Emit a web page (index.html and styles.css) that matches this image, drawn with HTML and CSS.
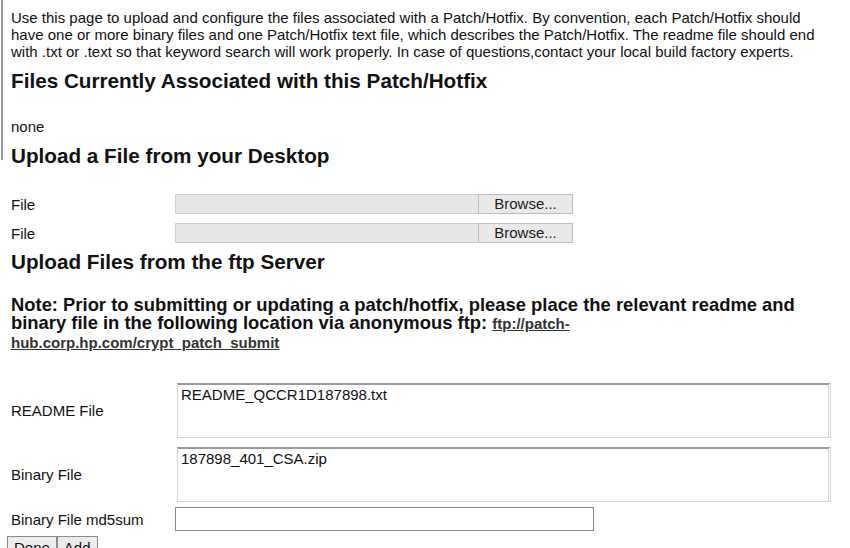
FILE: index.html
```html
<!DOCTYPE html>
<html>
<head>
<meta charset="utf-8">
<link rel="stylesheet" href="styles.css">
</head>
<body>
<div class="page">
  <div class="intro-block">
    <p class="intro">Use this page to upload and configure the files associated with a Patch/Hotfix. By convention, each Patch/Hotfix should have one or more binary files and one Patch/Hotfix text file, which describes the Patch/Hotfix. The readme file should end with .txt or .text so that keyword search will work properly. In case of questions,contact your local build factory experts.</p>
    <h3 class="section-title">Files Currently Associated with this Patch/Hotfix</h3>
    <p class="none">none</p>
  </div>
  <h3 class="section-title">Upload a File from your Desktop</h3>
  <div class="form-grid desktop">
    <label class="label">File</label>
    <div class="file-input"><span class="file-field"></span><span class="browse">Browse...</span></div>
    <label class="label">File</label>
    <div class="file-input"><span class="file-field"></span><span class="browse">Browse...</span></div>
  </div>
  <h3 class="section-title">Upload Files from the ftp Server</h3>
  <h4 class="note">Note: Prior to submitting or updating a patch/hotfix, please place the relevant readme and binary file in the following location via anonymous ftp: <a class="ftp-link" href="#">ftp://patch-hub.corp.hp.com/crypt_patch_submit</a></h4>
  <div class="form-grid ftp">
    <label class="label">README File</label>
    <textarea class="area">README_QCCR1D187898.txt</textarea>
    <label class="label">Binary File</label>
    <textarea class="area">187898_401_CSA.zip</textarea>
    <label class="label md5-label">Binary File md5sum</label>
    <input class="md5" type="text">
  </div>
  <div class="buttons">
    <button class="btn">Done</button><button class="btn">Add</button>
  </div>
</div>
</body>
</html>
```
FILE: styles.css
```css
html, body {
  margin: 0;
  padding: 0;
  background: #fff;
}
body {
  font-family: "Liberation Sans", Arial, sans-serif;
  font-size: 15px;
  color: #111;
}
.page {
  padding: 9px 10px 0 11px;
}
.intro-block {
  position: relative;
}
.intro-block::before {
  content: "";
  position: absolute;
  left: -10px;
  top: -9px;
  width: 2px;
  height: 160px;
  background: #9a9a9a;
}
.intro {
  margin: 0;
  line-height: 17px;
  width: 820px;
}
.section-title {
  font-size: 20.7px;
  font-weight: bold;
  margin: 9px 0 0 0;
  line-height: 24px;
}
.none {
  margin: 25px 0 0 0;
  line-height: 17px;
}
.form-grid {
  display: grid;
  grid-template-columns: 164px auto;
  justify-content: start;
  align-items: center;
}
.desktop {
  margin-top: 26px;
  row-gap: 9px;
}
.desktop + .section-title {
  margin-top: 7px;
}
.label {
  line-height: 17px;
}
.file-input {
  display: flex;
  height: 20px;
}
.file-field {
  width: 302px;
  background: #e6e6e6;
  border: 1px solid #cfcfcf;
  border-right: none;
}
.browse {
  width: 93px;
  background: #e9e9e9;
  border: 1px solid #bdbdbd;
  text-align: center;
  line-height: 18px;
  color: #222;
}
.note {
  font-size: 18.4px;
  font-weight: bold;
  margin: 22px 0 0 0;
  line-height: 18px;
  max-width: 815px;
}
.ftp-link {
  font-size: 15px;
  color: #333;
  text-decoration: underline;
}
.ftp {
  margin-top: 31px;
  row-gap: 9px;
}
.area {
  width: 644px;
  height: 50px;
  margin: 0 0 0 2px;
  padding: 1px 3px;
  font-family: "Liberation Sans", Arial, sans-serif;
  font-size: 15px;
  color: #111;
  border: 1px solid #d6d6d6;
  border-top: 2px solid #9a9a9a;
  border-right: 3px double #d6d6d6;
  resize: none;
  overflow: hidden;
  box-sizing: content-box;
}
.md5-label,
.md5 {
  margin-top: -4px;
}
.md5 {
  width: 415px;
  height: 22px;
  padding: 0 1px;
  border: 1px solid #8a8a8a;
  margin-left: 0;
  box-sizing: content-box;
}
.buttons {
  display: flex;
  margin: 5px 0 0 -4px;
}
.btn {
  font-family: "Liberation Sans", Arial, sans-serif;
  font-size: 15px;
  color: #111;
  background: #ececec;
  border: 1px solid #8a8a8a;
  padding: 2px 6px;
  margin: 0;
}
```
